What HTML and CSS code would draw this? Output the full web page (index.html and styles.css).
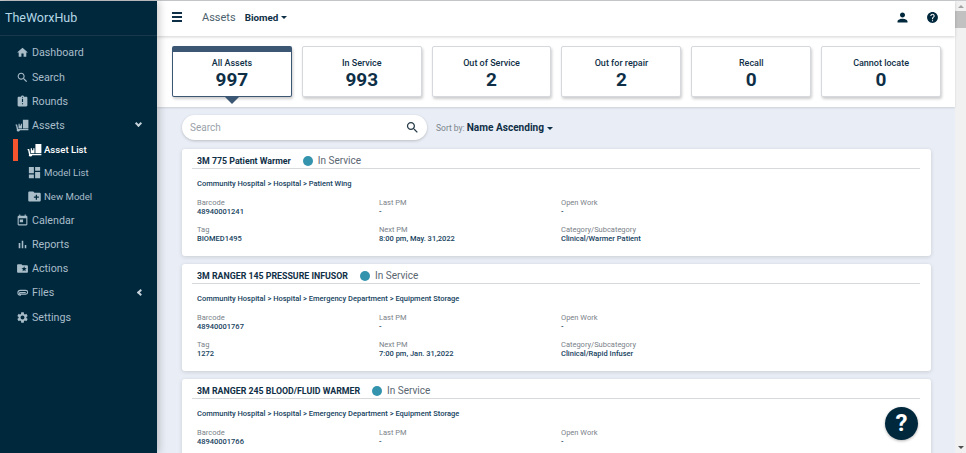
FILE: index.html
```html
<!DOCTYPE html>
<html lang="en">
<head>
  <meta charset="UTF-8" />
  <title>TheWorxHub - Assets</title>
  <link rel="stylesheet" href="styles.css">
</head>
<body>
  <svg class="sprite" xmlns="http://www.w3.org/2000/svg">
    <symbol id="i-home" viewBox="0 0 24 24"><path d="M10 20v-6h4v6h5v-8h3L12 3 2 12h3v8z"/></symbol>
    <symbol id="i-search" viewBox="0 0 24 24"><path d="M15.5 14h-.79l-.28-.27C15.41 12.59 16 11.11 16 9.5 16 5.91 13.09 3 9.5 3S3 5.91 3 9.5 5.91 16 9.5 16c1.61 0 3.09-.59 4.23-1.57l.27.28v.79l5 4.99L20.49 19l-4.99-5zm-6 0C7.01 14 5 11.99 5 9.5S7.01 5 9.5 5 14 7.01 14 9.5 11.99 14 9.5 14z"/></symbol>
    <symbol id="i-rounds" viewBox="0 0 24 24"><path d="M19 3h-4.18C14.4 1.84 13.3 1 12 1c-1.3 0-2.4.84-2.82 2H5c-1.1 0-2 .9-2 2v14c0 1.1.9 2 2 2h14c1.1 0 2-.9 2-2V5c0-1.1-.9-2-2-2zm-6 14h-2v-2h2v2zm0-4h-2V7h2v6zm-1-8c-.55 0-1-.45-1-1s.45-1 1-1 1 .45 1 1-.45 1-1 1z"/></symbol>
    <symbol id="i-dolly" viewBox="0 0 24 24"><path d="M13.500 3H23v15h-9.500zM6 10h2v3h2v-3h2v8H6z"/><path d="M1 11h2.500l2 8H23v2H8.500a3 3 0 0 1-5.800 0l.6-.6L1.800 13H1z"/></symbol>
    <symbol id="i-grid" viewBox="0 0 24 24"><path d="M3 13h8V3H3v10zm0 8h8v-6H3v6zm10 0h8V11h-8v10zm0-18v6h8V3h-8z"/></symbol>
    <symbol id="i-folder-plus" viewBox="0 0 24 24"><path d="M20 6h-8l-2-2H4c-1.100 0-2 .9-2 2v12c0 1.100.9 2 2 2h16c1.100 0 2-.9 2-2V8c0-1.100-.9-2-2-2zm-1 8h-3v3h-2v-3h-3v-2h3V9h2v3h3v2z"/></symbol>
    <symbol id="i-calendar" viewBox="0 0 24 24"><path d="M16 1v2H8V1H6v2H5c-1.110 0-2 .9-2 2v14c0 1.100.9 2 2 2h14c1.100 0 2-.9 2-2V5c0-1.100-.9-2-2-2h-1V1h-2zm3 18H5V8h14v11zM7 10h6v5H7z"/></symbol>
    <symbol id="i-bars" viewBox="0 0 24 24"><path d="M5 9.200h3V19H5zM10.600 5h2.800v14h-2.800zm5.600 8H19v6h-2.800z"/></symbol>
    <symbol id="i-folder-star" viewBox="0 0 24 24"><path d="M20 6h-8l-2-2H4c-1.100 0-2 .9-2 2v12c0 1.100.9 2 2 2h16c1.100 0 2-.9 2-2V8c0-1.100-.9-2-2-2zm-2.060 11L15 15.280 12.060 17l.78-3.330-2.590-2.240 3.410-.29L15 8l1.340 3.140 3.410.29-2.590 2.240.78 3.330z"/></symbol>
    <symbol id="i-link" viewBox="0 0 24 24"><path d="M8 7h10a4.500 4.500 0 0 1 0 9H8a2.500 2.500 0 0 1 0-5h10v2H8a.5.5 0 0 0 0 1h10a2.500 2.500 0 0 0 0-5H8a3.500 3.500 0 0 0 0 7h1v2H8A5.500 5.500 0 0 1 8 7z"/></symbol>
    <symbol id="i-cog" viewBox="0 0 24 24"><path d="M19.140 12.940c.04-.3.06-.61.06-.94 0-.32-.02-.64-.07-.94l2.030-1.580c.18-.14.23-.41.12-.61l-1.920-3.320c-.12-.22-.37-.29-.59-.22l-2.390.96c-.5-.38-1.030-.7-1.620-.94l-.36-2.540c-.04-.24-.24-.41-.48-.41h-3.840c-.24 0-.43.17-.47.41l-.36 2.540c-.59.24-1.130.57-1.620.94l-2.390-.96c-.22-.08-.47 0-.59.22L2.740 8.870c-.12.21-.08.47.12.61l2.030 1.580c-.05.3-.09.63-.09.94s.02.64.07.94l-2.030 1.580c-.18.14-.23.41-.12.61l1.920 3.320c.12.22.37.29.59.22l2.390-.96c.5.38 1.030.7 1.620.94l.36 2.540c.05.24.24.41.48.41h3.840c.24 0 .44-.17.47-.41l.36-2.540c.59-.24 1.130-.56 1.620-.94l2.390.96c.22.08.47 0 .59-.22l1.920-3.320c.12-.22.07-.47-.12-.61l-2.010-1.580zM12 15.600c-1.980 0-3.600-1.620-3.600-3.600s1.620-3.600 3.600-3.600 3.600 1.620 3.600 3.600-1.620 3.600-3.600 3.600z"/></symbol>
    <symbol id="i-user" viewBox="0 0 24 24"><path d="M12 12c2.210 0 4-1.790 4-4s-1.790-4-4-4-4 1.790-4 4 1.790 4 4 4zm0 2c-2.670 0-8 1.340-8 4v2h16v-2c0-2.660-5.330-4-8-4z"/></symbol>
    <symbol id="i-help" viewBox="0 0 24 24"><path d="M12 2C6.480 2 2 6.480 2 12s4.480 10 10 10 10-4.480 10-10S17.520 2 12 2zm1 17h-2v-2h2v2zm2.070-7.750l-.9.920C13.450 12.900 13 13.500 13 15h-2v-.5c0-1.100.45-2.100 1.170-2.830l1.240-1.260c.37-.36.59-.86.59-1.410 0-1.100-.9-2-2-2s-2 .9-2 2H8c0-2.210 1.790-4 4-4s4 1.790 4 4c0 .88-.36 1.680-.93 2.250z"/></symbol>
  </svg>

  <div class="app">
    <aside class="sidebar">
      <div class="brand">TheWorxHub</div>
      <nav class="nav">
        <a class="nav-item"><svg class="icon"><use href="#i-home"/></svg>Dashboard</a>
        <a class="nav-item"><svg class="icon"><use href="#i-search"/></svg>Search</a>
        <a class="nav-item"><svg class="icon"><use href="#i-rounds"/></svg>Rounds</a>
        <a class="nav-item"><svg class="icon wide"><use href="#i-dolly"/></svg>Assets<span class="chevron chevron-down"></span></a>
        <a class="nav-item sub active"><svg class="icon"><use href="#i-dolly"/></svg>Asset List</a>
        <a class="nav-item sub"><svg class="icon"><use href="#i-grid"/></svg>Model List</a>
        <a class="nav-item sub"><svg class="icon"><use href="#i-folder-plus"/></svg>New Model</a>
        <a class="nav-item"><svg class="icon"><use href="#i-calendar"/></svg>Calendar</a>
        <a class="nav-item"><svg class="icon"><use href="#i-bars"/></svg>Reports</a>
        <a class="nav-item"><svg class="icon"><use href="#i-folder-star"/></svg>Actions</a>
        <a class="nav-item"><svg class="icon"><use href="#i-link"/></svg>Files<span class="chevron chevron-left"></span></a>
        <a class="nav-item"><svg class="icon"><use href="#i-cog"/></svg>Settings</a>
      </nav>
    </aside>

    <div class="main">
      <header class="topbar">
        <div class="hamburger"><span></span><span></span><span></span></div>
        <span class="page-title">Assets</span>
        <span class="dept">Biomed<span class="caret"></span></span>
        <svg class="top-icon user-icon"><use href="#i-user"/></svg>
        <svg class="top-icon help-icon"><use href="#i-help"/></svg>
      </header>

      <section class="stats">
        <div class="stat selected"><div class="stat-label">All Assets</div><div class="stat-value">997</div></div>
        <div class="stat"><div class="stat-label">In Service</div><div class="stat-value">993</div></div>
        <div class="stat"><div class="stat-label">Out of Service</div><div class="stat-value">2</div></div>
        <div class="stat"><div class="stat-label">Out for repair</div><div class="stat-value">2</div></div>
        <div class="stat"><div class="stat-label">Recall</div><div class="stat-value">0</div></div>
        <div class="stat"><div class="stat-label">Cannot locate</div><div class="stat-value">0</div></div>
      </section>

      <section class="content">
        <div class="toolbar">
          <div class="search-box">
            <span class="search-hint">Search</span>
            <svg class="search-icon"><use href="#i-search"/></svg>
          </div>
          <span class="sort-label">Sort by:</span>
          <span class="sort-value">Name Ascending<span class="caret"></span></span>
        </div>

        <article class="card">
          <div class="card-head"><span class="card-title">3M 775 Patient Warmer</span><span class="dot"></span><span class="status">In Service</span></div>
          <div class="path">Community Hospital &gt; Hospital &gt; Patient Wing</div>
          <div class="fields">
            <div><div class="label">Barcode</div><div class="value">48940001241</div></div>
            <div><div class="label">Last PM</div><div class="value">-</div></div>
            <div><div class="label">Open Work</div><div class="value">-</div></div>
            <div><div class="label">Tag</div><div class="value">BIOMED1495</div></div>
            <div><div class="label">Next PM</div><div class="value">8:00 pm, May. 31,2022</div></div>
            <div><div class="label">Category/Subcategory</div><div class="value">Clinical/Warmer Patient</div></div>
          </div>
        </article>

        <article class="card">
          <div class="card-head"><span class="card-title">3M RANGER 145 PRESSURE INFUSOR</span><span class="dot"></span><span class="status">In Service</span></div>
          <div class="path">Community Hospital &gt; Hospital &gt; Emergency Department &gt; Equipment Storage</div>
          <div class="fields">
            <div><div class="label">Barcode</div><div class="value">48940001767</div></div>
            <div><div class="label">Last PM</div><div class="value">-</div></div>
            <div><div class="label">Open Work</div><div class="value">-</div></div>
            <div><div class="label">Tag</div><div class="value">1272</div></div>
            <div><div class="label">Next PM</div><div class="value">7:00 pm, Jan. 31,2022</div></div>
            <div><div class="label">Category/Subcategory</div><div class="value">Clinical/Rapid Infuser</div></div>
          </div>
        </article>

        <article class="card">
          <div class="card-head"><span class="card-title">3M RANGER 245 BLOOD/FLUID WARMER</span><span class="dot"></span><span class="status">In Service</span></div>
          <div class="path">Community Hospital &gt; Hospital &gt; Emergency Department &gt; Equipment Storage</div>
          <div class="fields">
            <div><div class="label">Barcode</div><div class="value">48940001766</div></div>
            <div><div class="label">Last PM</div><div class="value">-</div></div>
            <div><div class="label">Open Work</div><div class="value">-</div></div>
          </div>
        </article>

        <div class="help-fab">?</div>
      </section>
    </div>

    <div class="scrollbar">
      <span class="arrow arrow-up"></span>
      <span class="thumb"></span>
      <span class="arrow arrow-down"></span>
    </div>
  </div>
</body>
</html>
```

FILE: styles.css
```css
html, body {
  height: 100%;
  margin: 0;
  overflow: hidden;
}
body {
  font-family: Roboto, "Liberation Sans", sans-serif;
  color: #0f2f47;
}
.sprite {
  display: none;
}
.app {
  display: flex;
  height: 100%;
  box-sizing: border-box;
  border-top: 1px solid #c9cccf;
}

/* sidebar */
.sidebar {
  position: relative;
  z-index: 3;
  width: 157px;
  flex: none;
  background-color: #00283d;
  color: #a9bdc9;
  box-shadow: 2px 0 8px rgba(0, 0, 0, 0.22);
}
.brand {
  height: 34px;
  line-height: 34px;
  padding-left: 5px;
  font-size: 12.5px;
  color: #b5d8e6;
  border-bottom: 1px solid #18394c;
}
.nav {
  padding-top: 4.8px;
}
.nav-item {
  position: relative;
  display: flex;
  align-items: center;
  height: 24.2px;
  padding-left: 16px;
  font-size: 10.7px;
}
.nav-item .icon {
  width: 13px;
  height: 13px;
  margin-right: 3px;
  fill: currentColor;
  flex: none;
}
.nav-item .icon.wide {
  width: 14px;
  height: 14px;
  margin-left: -1px;
}
.nav-item.sub {
  padding-left: 28px;
  font-size: 9.6px;
  height: 23.6px;
}
.nav-item.sub .icon {
  width: 15px;
  height: 15px;
  margin-left: -1px;
  margin-right: 2px;
}
.nav-item.active {
  color: #fff;
  font-weight: 500;
}
.nav-item.active::before {
  content: "";
  position: absolute;
  left: 13px;
  top: 1px;
  width: 5px;
  height: 22px;
  background-color: #f4552e;
}
.chevron {
  position: absolute;
  width: 3px;
  height: 3px;
  border-left: 2px solid #c5d2da;
  border-bottom: 2px solid #c5d2da;
}
.chevron-down {
  left: 136px;
  top: 8px;
  transform: rotate(-45deg);
}
.chevron-left {
  left: 138px;
  top: 9px;
  transform: rotate(45deg);
}

/* top bar */
.main {
  flex: 1;
  min-width: 0;
  display: flex;
  flex-direction: column;
  background-color: #e9edf5;
}
.topbar {
  position: relative;
  z-index: 2;
  display: flex;
  align-items: center;
  height: 32px;
  flex: none;
  padding: 0 16px 3px 15px;
  background-color: #fff;
  box-shadow: 0 1px 3px rgba(0, 0, 0, 0.18);
}
.hamburger {
  display: flex;
  flex-direction: column;
  gap: 2px;
  width: 10px;
  margin-right: 20px;
}
.hamburger span {
  height: 2px;
  background-color: #0f2f47;
}
.page-title {
  font-size: 11px;
  color: #4c5f6d;
  margin-right: 9px;
}
.dept {
  font-size: 9.8px;
  font-weight: 700;
}
.caret {
  display: inline-block;
  vertical-align: middle;
  margin-left: 3px;
  border-top: 3px solid #0f2f47;
  border-left: 3px solid transparent;
  border-right: 3px solid transparent;
}
.top-icon {
  fill: #00283d;
}
.user-icon {
  width: 15px;
  height: 15px;
  margin-left: auto;
  margin-right: 16px;
}
.help-icon {
  width: 13px;
  height: 13px;
}

/* stat tiles */
.stats {
  display: flex;
  gap: 10px;
  height: 71px;
  flex: none;
  box-sizing: border-box;
  padding: 10px 14px 0 15px;
  background-color: #fff;
  box-shadow: 0 1px 2px rgba(0, 0, 0, 0.12);
  position: relative;
  z-index: 1;
}
.stat {
  position: relative;
  flex: 1;
  height: 51px;
  box-sizing: border-box;
  padding-top: 11px;
  text-align: center;
  background-color: #fff;
  border: 1px solid #d5d8dc;
  border-radius: 2px;
  box-shadow: 1px 2px 3px rgba(0, 0, 0, 0.2);
}
.stat.selected {
  border: 1px solid #3c5773;
  border-top-width: 6px;
  padding-top: 6px;
}
.stat.selected::after {
  content: "";
  position: absolute;
  left: 52px;
  bottom: -8px;
  border-top: 7px solid #3c5773;
  border-left: 7px solid transparent;
  border-right: 7px solid transparent;
}
.stat-label {
  font-size: 9px;
  font-weight: 500;
  line-height: 11px;
}
.stat-value {
  font-size: 19px;
  font-weight: 700;
  line-height: 22px;
}

/* list */
.content {
  flex: 1;
  min-height: 0;
  overflow: hidden;
  position: relative;
  padding: 0 24px 0 25px;
}
.toolbar {
  display: flex;
  align-items: center;
  height: 41px;
  padding-bottom: 1px;
}
.search-box {
  display: flex;
  align-items: center;
  justify-content: space-between;
  width: 245px;
  height: 25px;
  box-sizing: border-box;
  padding: 0 7px 0 8px;
  background-color: #fff;
  border-radius: 13px;
  box-shadow: 0 1px 3px rgba(0, 0, 0, 0.2);
  margin-right: 9px;
}
.search-hint {
  font-size: 10px;
  color: #9aa2a9;
}
.search-icon {
  width: 15px;
  height: 15px;
  fill: #263a47;
}
.sort-label {
  font-size: 8.5px;
  color: #7b858d;
  margin-right: 2px;
}
.sort-value {
  font-size: 10.1px;
  font-weight: 700;
}
.card {
  height: 107px;
  box-sizing: border-box;
  margin-bottom: 8px;
  padding: 0 11px 0 10px;
  background-color: #fff;
  border-radius: 3px;
  box-shadow: 0 1px 4px rgba(0, 0, 0, 0.14);
}
.card-head {
  display: flex;
  align-items: center;
  height: 15px;
  padding: 4px 0 0 5px;
  border-bottom: 1px solid #d7d9db;
}
.card-title {
  font-size: 8.8px;
  font-weight: 700;
}
.dot {
  width: 10px;
  height: 10px;
  margin: 0 5px 0 12px;
  border-radius: 50%;
  background-color: #3494ad;
}
.status {
  font-size: 10px;
  color: #5a6670;
}
.path {
  padding: 10px 0 0 5px;
  font-size: 7.5px;
  line-height: 10px;
  font-weight: 500;
  color: #16425e;
}
.fields {
  display: grid;
  grid-template-columns: repeat(3, 182px);
  row-gap: 8px;
  padding: 9px 0 0 5px;
}
.label {
  font-size: 7.5px;
  line-height: 9px;
  color: #7a8289;
}
.value {
  font-size: 7.5px;
  line-height: 10px;
  font-weight: 500;
  color: #16425e;
}
.help-fab {
  position: absolute;
  right: 37px;
  bottom: 13px;
  width: 33px;
  height: 33px;
  line-height: 33px;
  text-align: center;
  font-size: 24px;
  font-weight: 700;
  color: #fff;
  background-color: #00283d;
  border-radius: 50%;
  box-shadow: 0 1px 3px rgba(0, 0, 0, 0.3);
}

/* page scrollbar */
.scrollbar {
  position: relative;
  width: 11px;
  flex: none;
  background-color: #f1f1f1;
}
.thumb {
  position: absolute;
  left: 0;
  right: 0;
  top: 10px;
  height: 17px;
  background-color: #c1c1c1;
}
.arrow {
  position: absolute;
  left: 3px;
  border-left: 3px solid transparent;
  border-right: 3px solid transparent;
}
.arrow-up {
  top: 4px;
  border-bottom: 3px solid #a3a3a3;
}
.arrow-down {
  bottom: 4px;
  border-top: 3px solid #505050;
}
```
